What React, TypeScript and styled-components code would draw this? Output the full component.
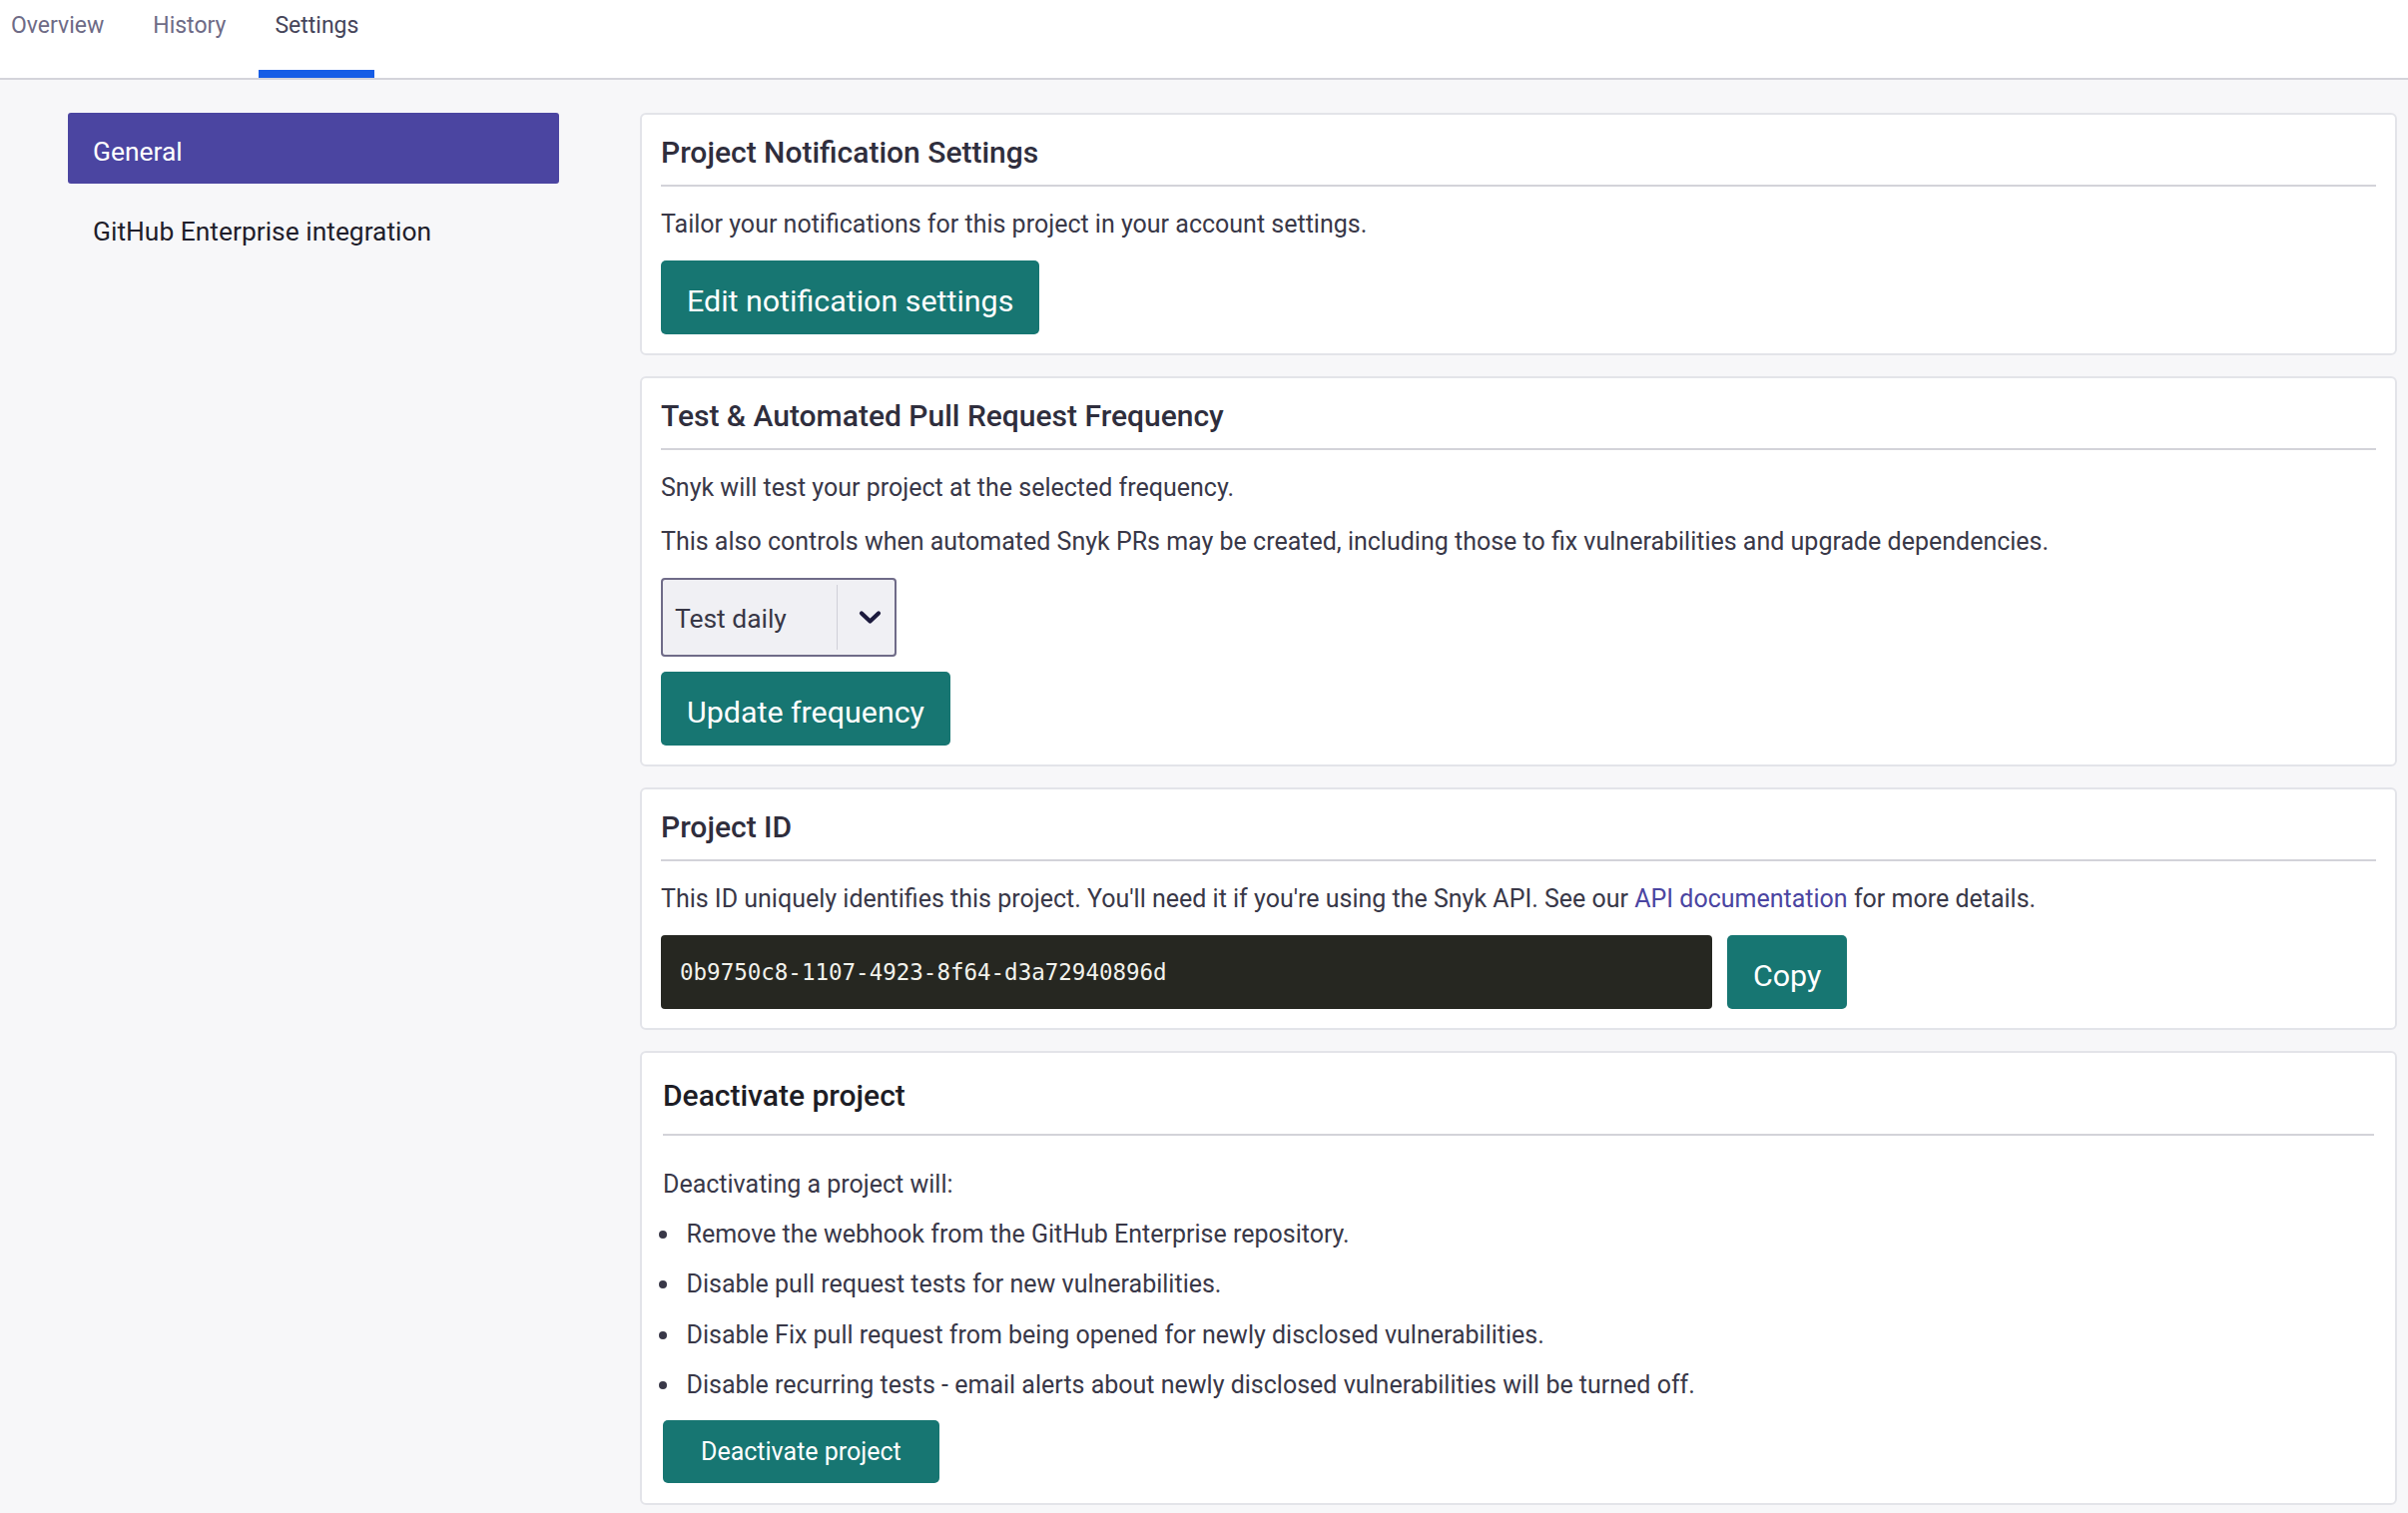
import React from 'react';
import styled, { createGlobalStyle } from 'styled-components';

const GlobalStyle = createGlobalStyle`
  html, body { margin: 0; padding: 0; }
  body {
    background: #f7f7f9;
    font-family: Roboto, "Noto Sans", "Liberation Sans", Arial, sans-serif;
    color: #393848;
    -webkit-font-smoothing: antialiased;
  }
  *, *::before, *::after { box-sizing: border-box; }
`;

const Page = styled.div`
  min-height: 1516px;
  background: #f7f7f9;
`;

const Header = styled.header`
  height: 80px;
  background: #ffffff;
  border-bottom: 2px solid #d4d4da;
  display: flex;
  align-items: flex-end;
`;

const Tabs = styled.nav`
  display: flex;
  gap: 17px;
  margin-left: -5px;
`;

const Tab = styled.a<{ $active?: boolean }>`
  display: block;
  height: 78px;
  padding: 12.5px 16px 0;
  font-size: 23px;
  line-height: 26px;
  text-decoration: none;
  color: ${(p) => (p.$active ? '#46455a' : '#6e6b86')};
  border-bottom: 8px solid ${(p) => (p.$active ? '#165de6' : 'transparent')};
`;

const Body = styled.div`
  display: flex;
  align-items: flex-start;
  gap: 81px;
  padding: 33px 11px 8px 68px;
`;

const Sidebar = styled.nav`
  flex: none;
  width: 492px;
  display: flex;
  flex-direction: column;
  gap: 9px;
`;

const NavItem = styled.a<{ $active?: boolean }>`
  display: block;
  height: 71px;
  padding: 24px 25px 0;
  font-size: 26.4px;
  line-height: 30px;
  border-radius: 3px;
  text-decoration: none;
  background: ${(p) => (p.$active ? '#4b45a1' : 'transparent')};
  color: ${(p) => (p.$active ? '#ffffff' : '#1f1e2b')};
`;

const Main = styled.main`
  flex: 1;
  display: flex;
  flex-direction: column;
  gap: 21px;
`;

const Card = styled.section<{ $wide?: boolean }>`
  background: #ffffff;
  border: 2px solid #e3e4e9;
  border-radius: 6px;
  padding: 0 ${(p) => (p.$wide ? '21px 20px' : '19px 19px')};
  display: flex;
  flex-direction: column;
  align-items: flex-start;
`;

const CardTitle = styled.h2<{ $strong?: boolean }>`
  align-self: stretch;
  margin: 0;
  padding: ${(p) => (p.$strong ? '26px 0 21px' : '21px 0 15px')};
  border-bottom: 2px solid #d3d3d9;
  font-size: 30px;
  line-height: 34px;
  font-weight: 500;
  color: ${(p) => (p.$strong ? '#1d1d25' : '#2f2e3d')};
`;

const Text = styled.p<{ $gap?: number }>`
  margin: ${(p) => p.$gap ?? 18}px 0 0;
  padding-top: 1px;
  font-size: 25px;
  line-height: 37px;
  color: #393848;
`;

const Link = styled.a`
  color: #4b45a1;
  text-decoration: none;
`;

const Button = styled.button<{ $small?: boolean; $gap?: number }>`
  margin-top: ${(p) => p.$gap ?? 18}px;
  height: ${(p) => (p.$small ? 63 : 74)}px;
  padding: ${(p) => (p.$small ? '0 38px' : '7px 26px 0')};
  border: none;
  border-radius: 5px;
  background: #177672;
  color: #ffffff;
  font-family: inherit;
  font-size: ${(p) => (p.$small ? 25 : 30.4)}px;
  font-weight: 400;
  cursor: pointer;
`;

const Select = styled.div`
  margin-top: 18px;
  display: flex;
  width: 236px;
  height: 79px;
  border: 2px solid #6f6b88;
  border-radius: 4px;
  background: #f0f0f4;
`;

const SelectValue = styled.span`
  flex: 1;
  display: flex;
  align-items: center;
  padding: 3px 12px 0;
  font-size: 26.4px;
  color: #383746;
`;

const SelectDivider = styled.span`
  width: 1px;
  margin: 5px 0;
  background: #d0d0d8;
`;

const SelectArrow = styled.span`
  width: 57px;
  padding-left: 7px;
  display: flex;
  align-items: center;
  justify-content: center;
  color: #1c1a3d;
`;

const CodeRow = styled.div`
  margin-top: 18px;
  display: flex;
  gap: 15px;
  align-items: stretch;
`;

const CodeBox = styled.code`
  width: 1053px;
  display: flex;
  align-items: center;
  padding: 0 19px;
  background: #262721;
  border-radius: 4px;
  color: #f2f2ec;
  font-family: "DejaVu Sans Mono", "Liberation Mono", monospace;
  font-size: 22.5px;
`;

const CopyButton = styled(Button)`
  margin-top: 0;
`;

const List = styled.ul`
  margin: 0;
  padding: 0;
  list-style: none;
`;

const ListItem = styled.li`
  display: flex;
  align-items: baseline;
  margin-top: 12.5px;
  font-size: 25px;
  line-height: 38px;
  color: #393848;
`;

const Bullet = styled.span`
  flex: none;
  width: 8px;
  height: 8px;
  margin: 0 19.5px 0 -4px;
  border-radius: 50%;
  background: #393848;
  transform: translateY(-4px);
`;

const Chevron = () => (
  <svg width="23" height="15" viewBox="0 0 23 15" fill="none">
    <path d="M3 3.5 L11.5 11.5 L20 3.5" stroke="currentColor" strokeWidth="4.2" strokeLinecap="round" strokeLinejoin="round" />
  </svg>
);

const bullets = [
  'Remove the webhook from the GitHub Enterprise repository.',
  'Disable pull request tests for new vulnerabilities.',
  'Disable Fix pull request from being opened for newly disclosed vulnerabilities.',
  'Disable recurring tests - email alerts about newly disclosed vulnerabilities will be turned off.',
];

export default function App() {
  return (
    <Page>
      <GlobalStyle />
      <Header>
        <Tabs>
          <Tab>Overview</Tab>
          <Tab>History</Tab>
          <Tab $active>Settings</Tab>
        </Tabs>
      </Header>
      <Body>
        <Sidebar>
          <NavItem $active>General</NavItem>
          <NavItem>GitHub Enterprise integration</NavItem>
        </Sidebar>
        <Main>
          <Card>
            <CardTitle>Project Notification Settings</CardTitle>
            <Text>Tailor your notifications for this project in your account settings.</Text>
            <Button>Edit notification settings</Button>
          </Card>

          <Card>
            <CardTitle>Test &amp; Automated Pull Request Frequency</CardTitle>
            <Text>Snyk will test your project at the selected frequency.</Text>
            <Text $gap={16}>
              This also controls when automated Snyk PRs may be created, including those to fix vulnerabilities and upgrade dependencies.
            </Text>
            <Select>
              <SelectValue>Test daily</SelectValue>
              <SelectDivider />
              <SelectArrow>
                <Chevron />
              </SelectArrow>
            </Select>
            <Button $gap={15}>Update frequency</Button>
          </Card>

          <Card>
            <CardTitle>Project ID</CardTitle>
            <Text>
              This ID uniquely identifies this project. You'll need it if you're using the Snyk API. See our{' '}
              <Link>API documentation</Link> for more details.
            </Text>
            <CodeRow>
              <CodeBox>0b9750c8-1107-4923-8f64-d3a72940896d</CodeBox>
              <CopyButton>Copy</CopyButton>
            </CodeRow>
          </Card>

          <Card $wide>
            <CardTitle $strong>Deactivate project</CardTitle>
            <Text $gap={29}>Deactivating a project will:</Text>
            <List>
              {bullets.map((b) => (
                <ListItem key={b}>
                  <Bullet />
                  {b}
                </ListItem>
              ))}
            </List>
            <Button $small $gap={16}>Deactivate project</Button>
          </Card>
        </Main>
      </Body>
    </Page>
  );
}
